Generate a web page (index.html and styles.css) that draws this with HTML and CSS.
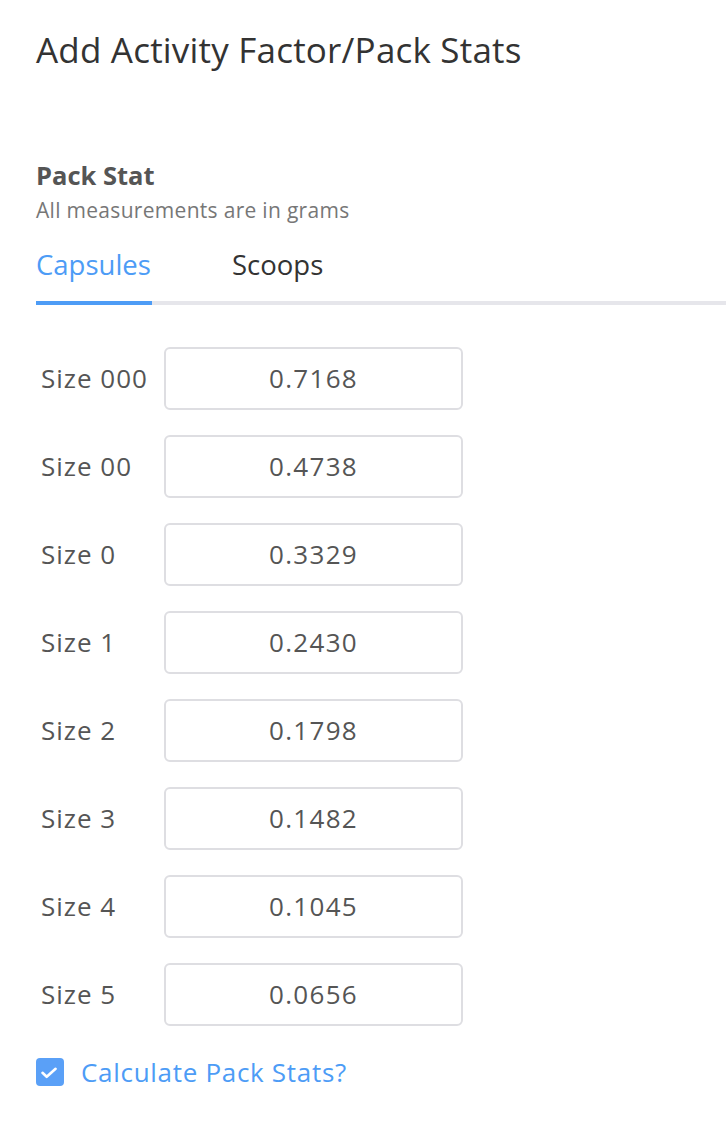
FILE: index.html
```html
<!DOCTYPE html>
<html>
<head>
<meta charset="utf-8">
<link rel="stylesheet" href="styles.css">
</head>
<body>
<div class="page">
  <h1 class="title">Add Activity Factor/Pack Stats</h1>
  <section class="pack">
    <h2 class="pack-title">Pack Stat</h2>
    <p class="pack-sub">All measurements are in grams</p>
    <div class="tabs">
      <div class="tab active">Capsules</div>
      <div class="tab">Scoops</div>
    </div>
    <div class="rows">
      <div class="row"><span class="label">Size 000</span><div class="input">0.7168</div></div>
      <div class="row"><span class="label">Size 00</span><div class="input">0.4738</div></div>
      <div class="row"><span class="label">Size 0</span><div class="input">0.3329</div></div>
      <div class="row"><span class="label">Size 1</span><div class="input">0.2430</div></div>
      <div class="row"><span class="label">Size 2</span><div class="input">0.1798</div></div>
      <div class="row"><span class="label">Size 3</span><div class="input">0.1482</div></div>
      <div class="row"><span class="label">Size 4</span><div class="input">0.1045</div></div>
      <div class="row"><span class="label">Size 5</span><div class="input">0.0656</div></div>
    </div>
    <div class="check">
      <span class="box"><svg width="28" height="28" viewBox="0 0 28 28"><path d="M6.5 14.8l4.2 4L19.6 10.8" fill="none" stroke="#fff" stroke-width="2.6" stroke-linecap="round" stroke-linejoin="round"/></svg></span>
      <span class="check-label">Calculate Pack Stats?</span>
    </div>
  </section>
</div>
</body>
</html>
```
FILE: styles.css
```css
* { box-sizing: border-box; }
body { margin: 0; background: #fff; font-family: "Open Sans", Lato, sans-serif; }
.page { padding: 28px 0 0 36px; }
.title { margin: 0; font-size: 35px; font-weight: 400; color: #333; line-height: 44px; letter-spacing: 0.2px; }
.pack { margin-top: 87px; }
.pack-title { margin: 0; font-size: 25.5px; font-weight: 700; color: #555; line-height: 32px; }
.pack-sub { margin: 7px 0 0; font-size: 21px; color: #777; line-height: 24px; letter-spacing: 0.3px; }
.tabs { display: flex; border-bottom: 4px solid #e6e6eb; margin-top: 23px; height: 60px; }
.tab { font-size: 27.5px; color: #333; line-height: 40px; }
.tab.active { color: #4d9cf6; width: 116px; border-bottom: 4px solid #4d9cf6; margin-bottom: -4px; height: 60px; }
.tab + .tab { margin-left: 80px; }
.rows { margin-top: 42px; display: flex; flex-direction: column; gap: 25px; }
.row { display: flex; align-items: center; }
.label { width: 128px; padding-left: 5px; font-size: 26px; letter-spacing: 1px; color: #555; line-height: 32px; padding-bottom: 2px; }
.input { width: 299px; height: 63px; border: 2px solid #dedee2; border-radius: 6px; display: flex; align-items: center; justify-content: center; font-size: 26px; letter-spacing: 1.3px; color: #555; padding-bottom: 2px; }
.check { display: flex; align-items: center; margin-top: 32px; height: 28px; }
.box { width: 28px; height: 28px; border-radius: 4px; background: #5aa0f7; display: flex; }
.check-label { margin-left: 17px; font-size: 26px; letter-spacing: 0.7px; color: #4d9cf6; line-height: 28px; }
```
